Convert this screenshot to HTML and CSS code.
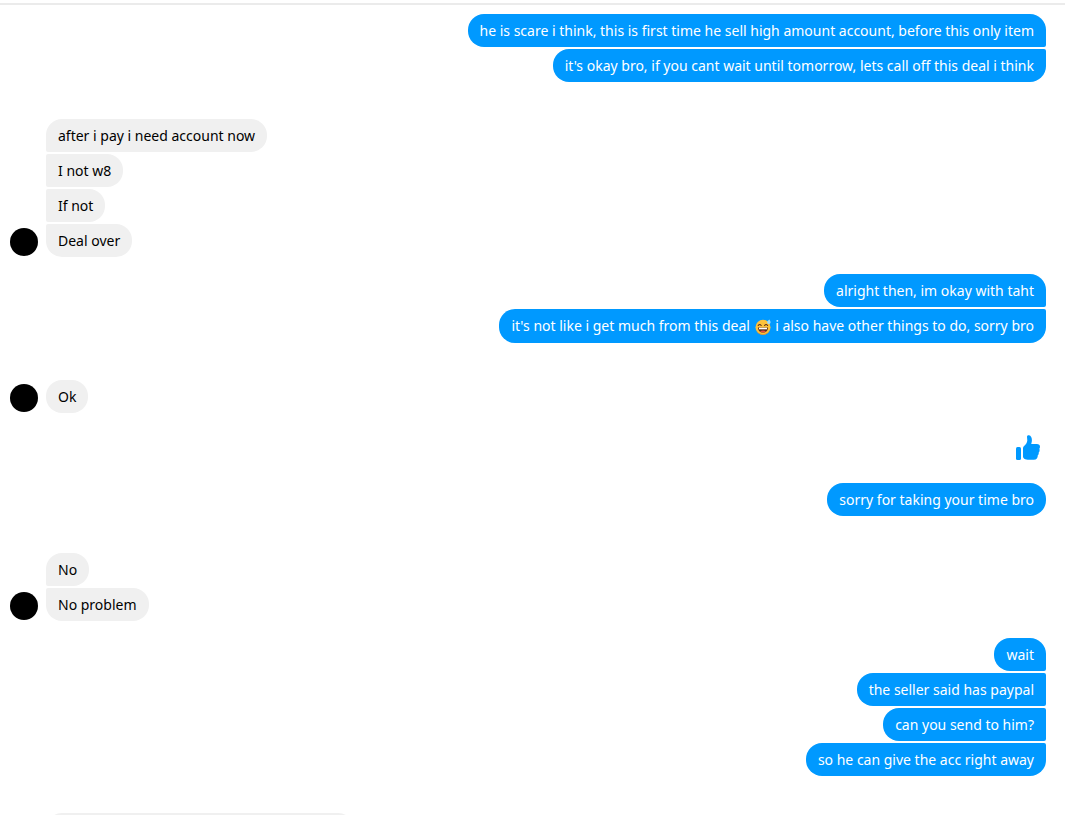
FILE: index.html
```html
<!DOCTYPE html>
<html lang="en">
<head>
<meta charset="utf-8">
<meta name="viewport" content="width=device-width, initial-scale=1">
<title>Conversation</title>
<link rel="stylesheet" href="styles.css">
</head>
<body>
<main class="chat">
  <section class="group mine">
    <p class="bubble">he is scare i think, this is first time he sell high amount account, before this only item</p>
    <p class="bubble">it's okay bro, if you cant wait until tomorrow, lets call off this deal i think</p>
  </section>

  <section class="group theirs">
    <span class="avatar"></span>
    <div class="stack">
      <p class="bubble">after i pay i need account now</p>
      <p class="bubble">I not w8</p>
      <p class="bubble">If not</p>
      <p class="bubble">Deal over</p>
    </div>
  </section>

  <section class="group mine">
    <p class="bubble">alright then, im okay with taht</p>
    <p class="bubble with-emoji">it's not like i get much from this deal <svg class="emoji" viewBox="0 0 16 16" aria-hidden="true">
      <circle cx="8" cy="8.300" r="7.500" fill="#fcc23b"/>
      <path d="M1 11a7.500 7.500 0 0 0 14 0 8 8 0 0 1-14 0z" fill="#e98b24"/>
      <path d="M3 8.500h10c0 3-2 5-5 5s-5-2-5-5z" fill="#5b2f1b"/>
      <path d="M4 8.700h8v1.600H4z" fill="#fff"/>
      <path d="M5 12.500q3-2 6 0-3 2-6 0z" fill="#e8503f"/>
      <path d="M3.200 6.500q1.500-2 3 0M9.600 6.500q1.500-2 3 0" fill="none" stroke="#5b2f1b" stroke-width="1.100" stroke-linecap="round"/>
      <path d="M14.500.5c-1.600 1-2.500 2-2.400 3.100.2 1.900 3 1.900 3.400.2.200-.9-.3-2-1-3.300z" fill="#9bdcff"/>
    </svg> i also have other things to do, sorry bro</p>
  </section>

  <section class="group theirs">
    <span class="avatar"></span>
    <div class="stack">
      <p class="bubble">Ok</p>
    </div>
  </section>

  <section class="group mine">
    <div class="like">
      <svg class="thumb" viewBox="0 0 24 26" role="img" aria-label="Like">
        <rect x="0" y="12" width="5" height="13" rx="1.500"/>
        <path d="M7 13.500c0-1 .3-1.700 1.100-2.500 1.900-1.600 3-3.300 3.200-5.600l-.3-3.600C11 .5 12 0 13 .3c2 .5 2.900 2.400 2.900 4.700 0 1.700-.4 3-.7 4.100h5.600c2 0 3.200 1.100 3.200 2.700 0 .9-.3 1.500-.7 2 .3.500.4 1 .3 1.600 0 .9-.4 1.600-.9 2 .2 1.200-.1 2.200-.9 2.900.1 2.600-1.200 4.500-4 4.500h-4.600c-2.200 0-3.700-.3-5-1.100-.8-.5-1.200-1.200-1.200-2.200z"/>
      </svg>
    </div>
  </section>

  <section class="group mine">
    <p class="bubble">sorry for taking your time bro</p>
  </section>

  <section class="group theirs">
    <span class="avatar"></span>
    <div class="stack">
      <p class="bubble">No</p>
      <p class="bubble">No problem</p>
    </div>
  </section>

  <section class="group mine">
    <p class="bubble">wait</p>
    <p class="bubble">the seller said has paypal</p>
    <p class="bubble">can you send to him?</p>
    <p class="bubble">so he can give the acc right away</p>
  </section>

  <section class="group theirs">
    <div class="stack">
      <p class="bubble upcoming"></p>
    </div>
  </section>
</main>
</body>
</html>
```
FILE: styles.css
```css
* {
  box-sizing: border-box;
}

body {
  margin: 0;
  height: 100vh;
  overflow: hidden;
  background: #fff;
  color: #000;
  font-family: "Segoe UI", "Noto Sans", "Open Sans", sans-serif;
  font-size: 14px;
  line-height: 19px;
}

.chat {
  margin-top: 3px;
  padding: 9px 19px 0 10px;
  border-top: 2px solid #ebebeb;
}

.group {
  display: flex;
}

.mine {
  flex-direction: column;
  align-items: flex-end;
  gap: 2px;
  margin-top: 17px;
}

.theirs {
  align-items: flex-end;
  gap: 8px;
  margin-top: 37px;
}

.group:first-child {
  margin-top: 0;
}

.stack {
  display: flex;
  flex-direction: column;
  align-items: flex-start;
  gap: 2px;
}

.group > .stack:first-child {
  margin-left: 36px;
}

.avatar {
  flex: none;
  width: 28px;
  height: 28px;
  margin-bottom: 1px;
  border-radius: 50%;
  background: #000;
}

.bubble {
  margin: 0;
  min-height: 33px;
  padding: 7px 12px;
  border-radius: 16px;
}

.mine .bubble {
  background: #0099ff;
  color: #fff;
}

.theirs .bubble {
  background: #f0f0f0;
}

.mine .bubble:not(:first-child) {
  border-top-right-radius: 2px;
}

.mine .bubble:not(:last-child) {
  border-bottom-right-radius: 2px;
}

.theirs .bubble:not(:first-child) {
  border-top-left-radius: 2px;
}

.theirs .bubble:not(:last-child) {
  border-bottom-left-radius: 2px;
}

.with-emoji {
  min-height: 34px;
}

.emoji {
  width: 16px;
  height: 16px;
  margin: 0 1px;
  vertical-align: -4px;
}

.like {
  display: flex;
  align-items: center;
  height: 36px;
  padding-right: 6px;
}

.thumb {
  width: 24px;
  height: 26px;
  fill: #0099ff;
}

.upcoming {
  width: 308px;
}
```
